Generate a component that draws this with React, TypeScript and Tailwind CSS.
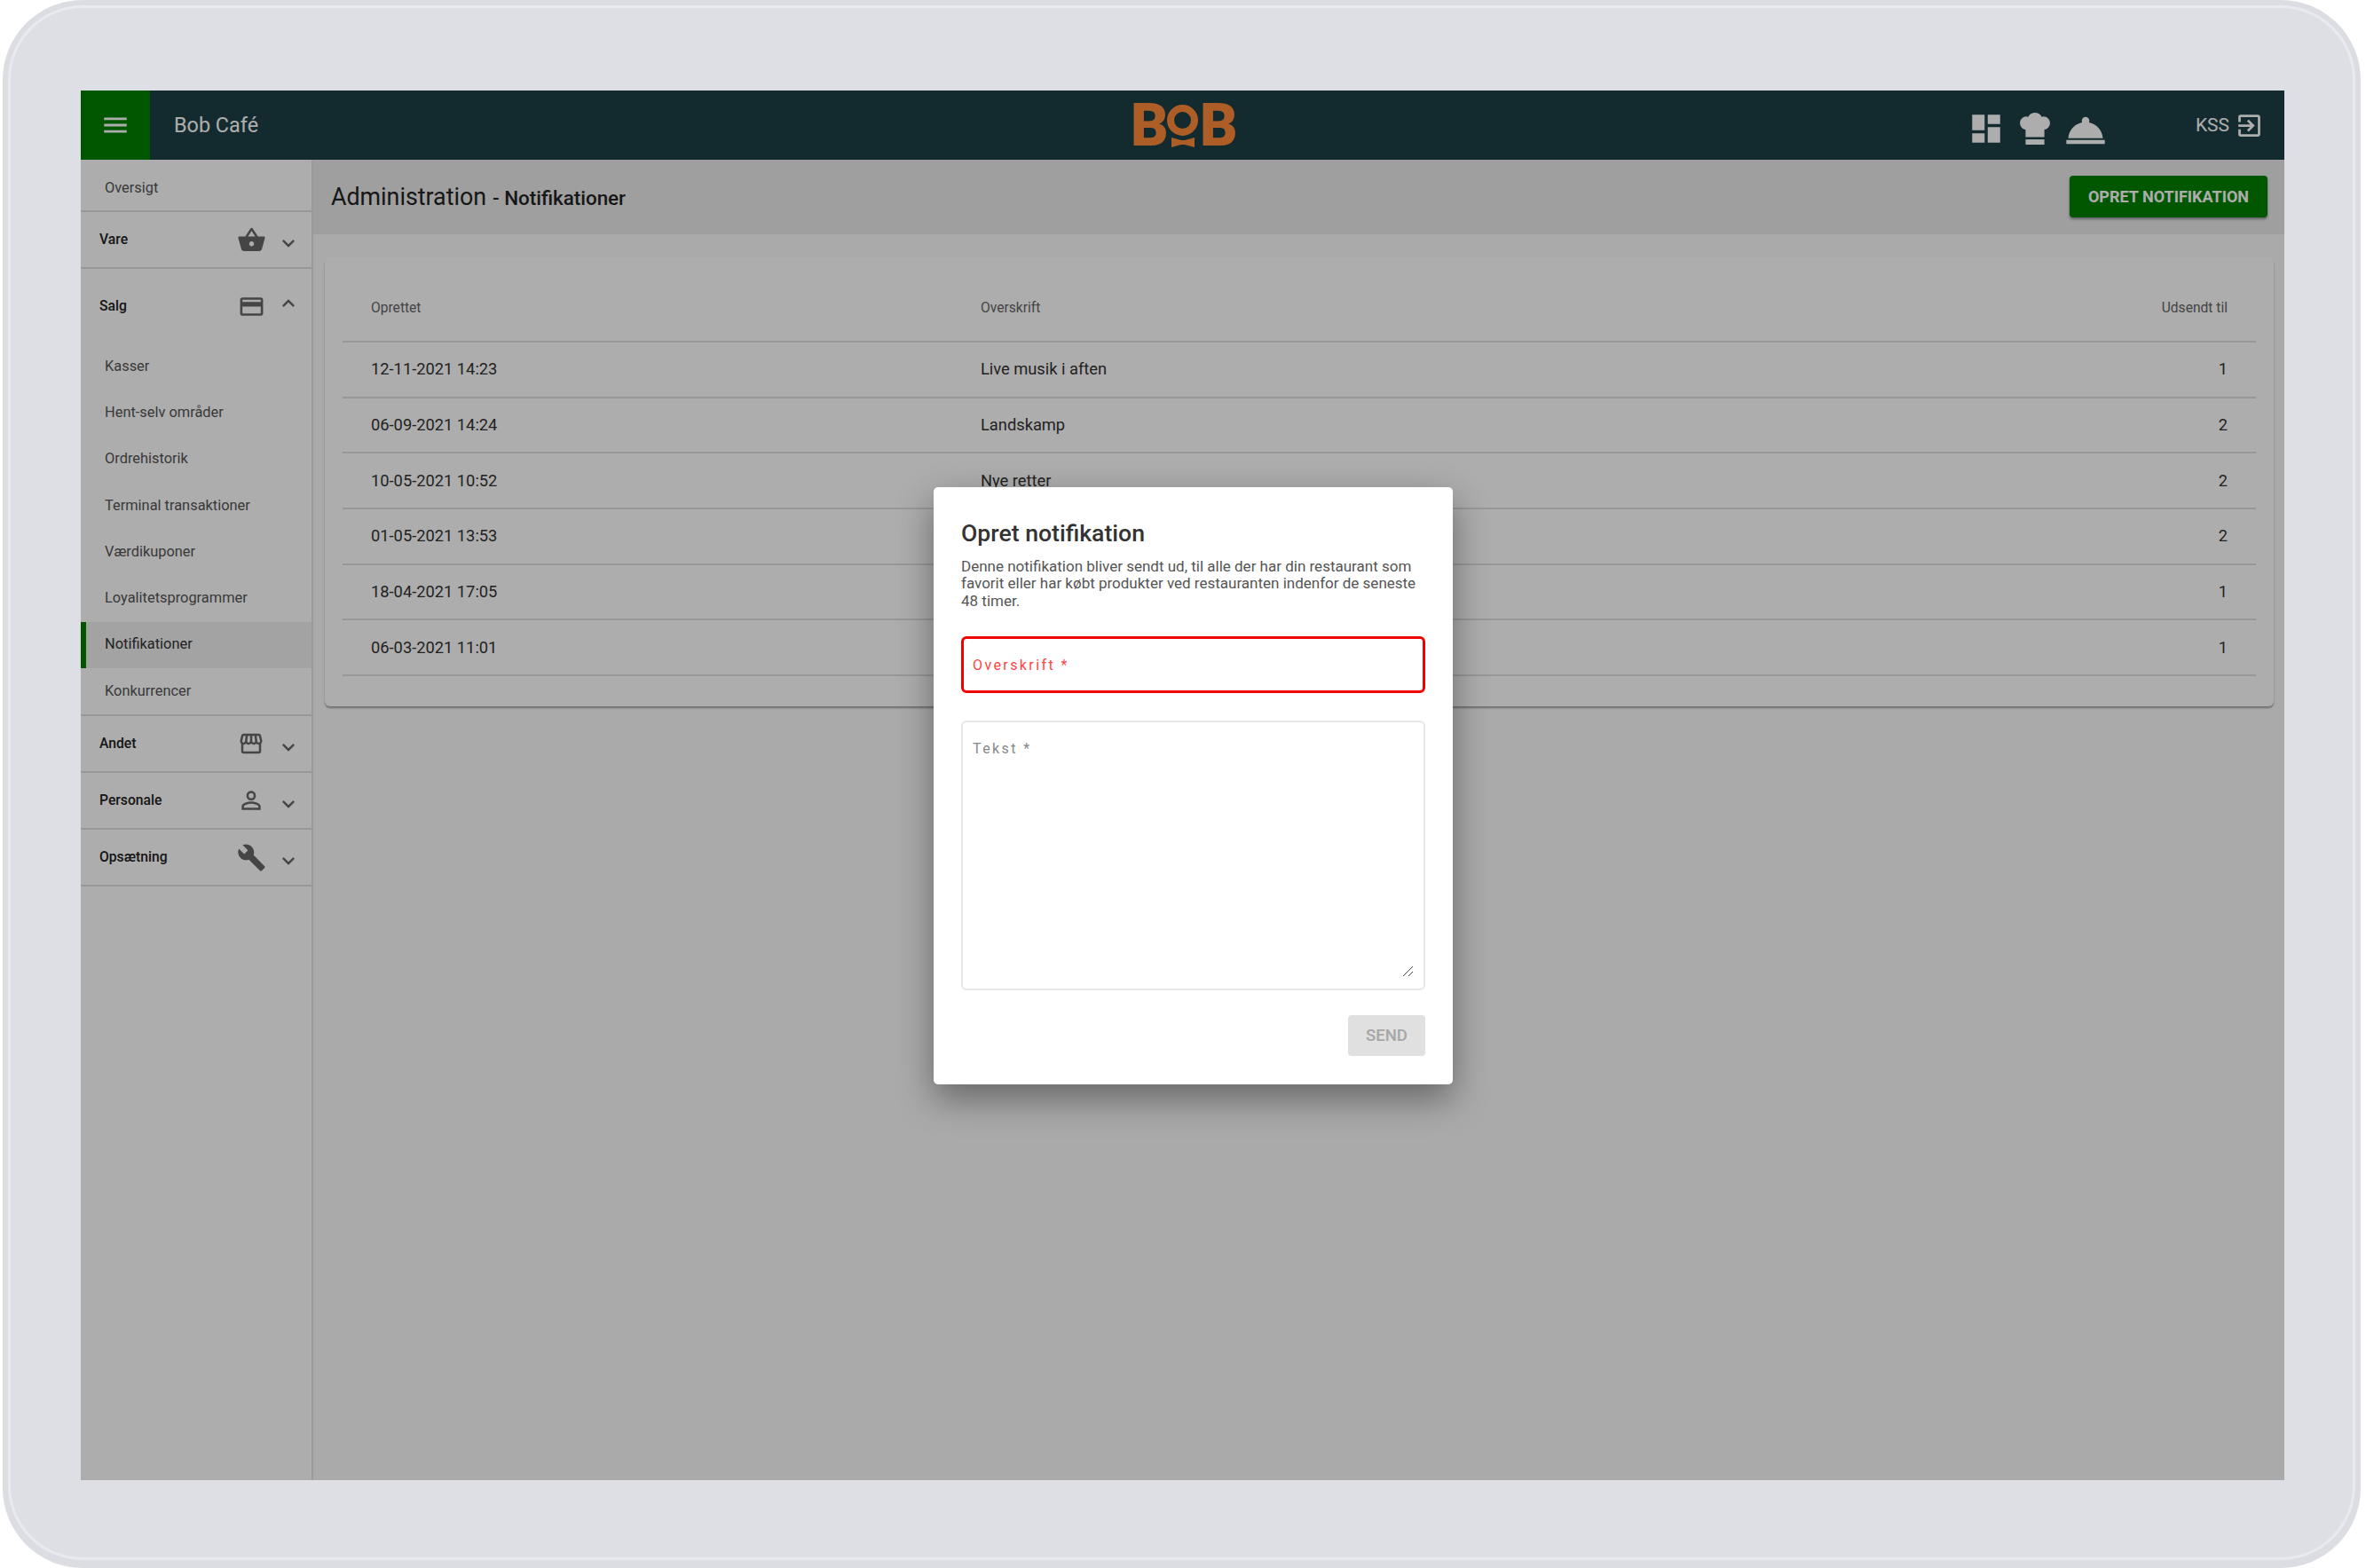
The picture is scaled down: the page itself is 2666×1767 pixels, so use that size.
import React from 'react';
import {
  MdMenu,
  MdDashboard,
  MdRoomService,
  MdExitToApp,
  MdShoppingBasket,
  MdOutlineCreditCard,
  MdOutlineStorefront,
  MdPersonOutline,
  MdBuild,
  MdExpandMore,
  MdExpandLess,
} from 'react-icons/md';

const salesItems = [
  'Kasser',
  'Hent-selv områder',
  'Ordrehistorik',
  'Terminal transaktioner',
  'Værdikuponer',
  'Loyalitetsprogrammer',
  'Notifikationer',
  'Konkurrencer',
];

const rows = [
  { created: '12-11-2021 14:23', title: 'Live musik i aften', sent: 1 },
  { created: '06-09-2021 14:24', title: 'Landskamp', sent: 2 },
  { created: '10-05-2021 10:52', title: 'Nye retter', sent: 2 },
  { created: '01-05-2021 13:53', title: '', sent: 2 },
  { created: '18-04-2021 17:05', title: '', sent: 1 },
  { created: '06-03-2021 11:01', title: '', sent: 1 },
];

const ChefHat = () => (
  <svg width="34" height="36" viewBox="4 3 16 17" fill="currentColor">
    <path d="M12 3c-1.6 0-3 .9-3.6 2.2-.3-.1-.6-.2-.9-.2C5.6 5 4 6.6 4 8.5c0 1.5 1 2.8 2.3 3.3l.7.2v4h10v-4l.7-.2c1.3-.5 2.3-1.8 2.3-3.3C20 6.6 18.4 5 16.5 5c-.3 0-.6.1-.9.2C15 3.9 13.6 3 12 3z" />
    <path d="M7 17.2h10V20H7z" />
  </svg>
);

const Logo = () => (
  <div className="mt-[2px] flex h-[48px] items-start text-[66px] leading-[48px] font-black text-[#ff8b39]">
    <span className="w-[39px]">B</span>
    <div className="flex w-[39px] flex-col items-center">
      <div className="h-[35px] w-[35px] rounded-full border-[8px] border-[#ff8b39]" />
      <svg width="26" height="11" viewBox="0 0 26 11" fill="currentColor" className="mt-[2px]">
        <path d="M0 0l11 3h4l11-3v11l-11-3h-4L0 11z" />
      </svg>
    </div>
    <span className="w-[39px]">B</span>
  </div>
);

const Header = () => (
  <header className="grid h-[78px] shrink-0 grid-cols-[1fr_auto_1fr] items-center bg-[#1d3f46] text-white">
    <div className="flex items-center">
      <div className="flex h-[78px] w-[78px] items-center justify-center bg-[#008000]">
        <MdMenu size={34} />
      </div>
      <span className="mt-[1px] ml-[27px] text-[23.4px]">Bob Café</span>
    </div>
    <Logo />
    <div className="flex items-center justify-end pr-[23px]">
      <MdDashboard size={42} className="mt-[8px]" />
      <div className="mt-[8px] ml-[17px]">
        <ChefHat />
      </div>
      <MdRoomService size={52} className="mt-[12px] ml-[14px]" />
      <span className="mt-[2px] ml-[98px] text-[21px]">KSS</span>
      <MdExitToApp size={33} className="ml-[6px]" />
    </div>
  </header>
);

const SectionRow = ({
  label,
  icon,
  open,
  height,
}: {
  label: string;
  icon: React.ReactNode;
  open?: boolean;
  height: string;
}) => (
  <div className={`flex items-center pr-[12px] pl-[21px] ${height}`}>
    <span className="flex-1 text-[15.7px] font-medium text-[#222]">{label}</span>
    <div className="flex w-[36px] justify-center text-[#666]">{icon}</div>
    <div className={`ml-[10px] text-[#666] ${open ? '-mt-[6px]' : 'mt-[7px]'}`}>
      {open ? <MdExpandLess size={28} /> : <MdExpandMore size={28} />}
    </div>
  </div>
);

const Sidebar = () => (
  <aside className="flex w-[262px] shrink-0 flex-col border-r-2 border-[#e4e4e4] bg-white">
    <div className="flex h-[59px] items-center border-b-2 border-[#e0e0e0] pt-[7px] pl-[27px] text-[16.4px] text-[#555]">
      Oversigt
    </div>
    <div className="border-b-2 border-[#e0e0e0]">
      <SectionRow label="Vare" icon={<MdShoppingBasket size={33} />} height="h-[62px]" />
    </div>
    <div className="border-b-2 border-[#e0e0e0]">
      <SectionRow label="Salg" icon={<MdOutlineCreditCard size={31} />} open height="h-[84px]" />
      {salesItems.map((item) =>
        item === 'Notifikationer' ? (
          <div
            key={item}
            className="flex h-[52.25px] items-center border-l-[6px] border-[#008000] bg-[#f0f0f0] pl-[21px] text-[16.4px] text-[#333]"
          >
            {item}
          </div>
        ) : (
          <div key={item} className="flex h-[52.25px] items-center pl-[27px] text-[16.4px] text-[#555]">
            {item}
          </div>
        ),
      )}
    </div>
    <div className="border-b-2 border-[#e0e0e0]">
      <SectionRow label="Andet" icon={<MdOutlineStorefront size={30} />} height="h-[62px]" />
    </div>
    <div className="border-b-2 border-[#e0e0e0]">
      <SectionRow label="Personale" icon={<MdPersonOutline size={32} />} height="h-[62px]" />
    </div>
    <div className="border-b-2 border-[#e0e0e0]">
      <SectionRow label="Opsætning" icon={<MdBuild size={33} />} height="h-[62px]" />
    </div>
  </aside>
);

const NotificationTable = () => (
  <div className="h-[506px] rounded-[6px] bg-white px-[20px] pt-[32px] shadow-[0_2px_2px_rgba(0,0,0,0.35)]">
    <div className="grid h-[64px] grid-cols-[687px_1fr_auto] items-center border-b-2 border-[#e0e0e0] px-[32px] pb-[10px] text-[15.6px] text-[#666]">
      <span>Oprettet</span>
      <span>Overskrift</span>
      <span>Udsendt til</span>
    </div>
    {rows.map((row) => (
      <div
        key={row.created}
        className="grid h-[62.7px] grid-cols-[687px_1fr_auto] items-center border-b-2 border-[#e0e0e0] px-[32px] pb-[1px] text-[18.3px] text-[#333]"
      >
        <span>{row.created}</span>
        <span>{row.title}</span>
        <span>{row.sent}</span>
      </div>
    ))}
  </div>
);

const NotificationDialog = () => (
  <div className="flex h-[673px] w-[585px] flex-col rounded-[5px] bg-white px-[31px] pt-[38px] shadow-[0_16px_40px_rgba(0,0,0,0.4)]">
    <h2 className="text-[26.6px] leading-[28px] font-medium text-[#333]">Opret notifikation</h2>
    <p className="mt-[14px] text-[17px] leading-[19.6px] text-[#555]">
      Denne notifikation bliver sendt ud, til alle der har din restaurant som favorit eller har købt produkter ved
      restauranten indenfor de seneste 48 timer.
    </p>
    <div className="mt-[30px] flex h-[64px] items-center rounded-[6px] border-[3px] border-[#f00000] pt-[1px] pl-[10px] text-[16px] tracking-[0.15em] text-[#f44]">
      Overskrift *
    </div>
    <div className="mt-[31px] flex h-[304px] flex-col justify-between rounded-[6px] border-2 border-[#e8e8e8] pt-[20px] pr-[12px] pb-[14px] pl-[11px]">
      <span className="text-[16px] leading-[20px] tracking-[0.15em] text-[#888]">Tekst *</span>
      <svg width="11" height="11" viewBox="0 0 11 11" stroke="#444" strokeWidth="1" className="self-end">
        <path d="M0 11L11 0M6 11l5-5" />
      </svg>
    </div>
    <div className="mt-[28px] flex justify-end">
      <div className="flex h-[46px] w-[87px] items-center justify-center rounded-[4px] bg-[#e0e0e0] pt-[1px] text-[18.5px] font-medium text-[#a6a6a6]">
        SEND
      </div>
    </div>
  </div>
);

export default function App() {
  return (
    <div className="h-[1767px] w-[2666px] overflow-hidden bg-white font-[Roboto,sans-serif]">
      <div className="ml-[3px] h-[1767px] w-[2657px] rounded-[90px] bg-[#dcdde2] pt-[6px] pr-[6px] pb-[9px] pl-[6px]">
        <div className="h-full rounded-[84px] border-[3px] border-[#e9eaef] bg-[#dedfe4] pt-[93px] pl-[79px]">
          <div className="relative flex h-[1566px] w-[2483px] flex-col overflow-hidden bg-[#fbfbfb]">
            <Header />
            <div className="flex flex-1">
              <Sidebar />
              <main className="flex-1">
                <div className="flex h-[84px] items-center justify-between bg-[#ebebeb] pr-[19px] pl-[20px]">
                  <h1 className="text-[#222]">
                    <span className="text-[26.8px]">Administration</span>
                    <span className="ml-[7px] text-[22.4px] font-medium">- Notifikationer</span>
                  </h1>
                  <button className="-mt-[1px] h-[47px] w-[223px] rounded-[4px] bg-[#008000] text-[18px] font-bold text-white shadow-[0_2px_3px_rgba(0,0,0,0.4)]">
                    OPRET NOTIFIKATION
                  </button>
                </div>
                <div className="pt-[26px] pr-[12px] pl-[13px]">
                  <NotificationTable />
                </div>
              </main>
            </div>
            <div className="absolute inset-0 flex items-center justify-center bg-black/[0.32] pl-[24px]">
              <NotificationDialog />
            </div>
          </div>
        </div>
      </div>
    </div>
  );
}
